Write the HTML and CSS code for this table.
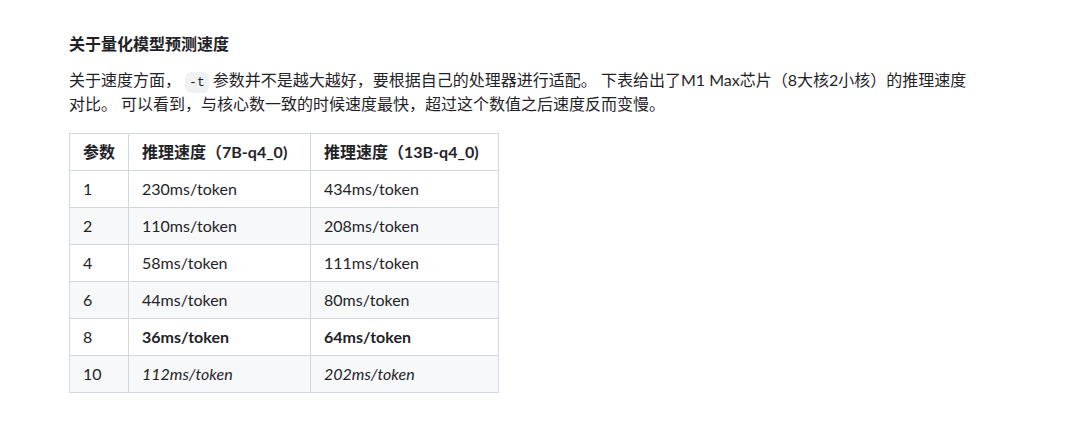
FILE: index.html
```html
<!DOCTYPE html>
<html lang="zh-CN">
<head>
<meta charset="utf-8">
<link rel="stylesheet" href="styles.css">
</head>
<body>
<article class="md">
  <h3 class="md-h">关于量化模型预测速度</h3>
  <p class="md-p">关于速度方面， <code class="md-code">-t</code> 参数并不是越大越好，要根据自己的处理器进行适配。 下表给出了M1 Max芯片（8大核2小核）的推理速度对比。 可以看到，与核心数一致的时候速度最快，超过这个数值之后速度反而变慢。</p>
  <table class="md-table">
    <thead>
      <tr><th>参数</th><th>推理速度（7B-q4_0)</th><th>推理速度（13B-q4_0)</th></tr>
    </thead>
    <tbody>
      <tr><td>1</td><td>230ms/token</td><td>434ms/token</td></tr>
      <tr><td>2</td><td>110ms/token</td><td>208ms/token</td></tr>
      <tr><td>4</td><td>58ms/token</td><td>111ms/token</td></tr>
      <tr><td>6</td><td>44ms/token</td><td>80ms/token</td></tr>
      <tr><td>8</td><td><strong>36ms/token</strong></td><td><strong>64ms/token</strong></td></tr>
      <tr><td>10</td><td><em>112ms/token</em></td><td><em>202ms/token</em></td></tr>
    </tbody>
  </table>
</article>
</body>
</html>
```

FILE: styles.css
```css
html, body {
  margin: 0;
  padding: 0;
  background: #ffffff;
}
body {
  font-family: "Lato", "Noto Sans CJK SC", sans-serif;
  color: #1f2328;
}
.md {
  padding: 32px 0 0 69px;
  width: 906px;
}
.md-h {
  margin: 0;
  font-size: 16px;
  line-height: 24px;
  font-weight: 700;
}
.md-p {
  margin: 12px 0 0 0;
  font-size: 16px;
  line-height: 24px;
}
.md-code {
  font-family: "Liberation Mono", "DejaVu Sans Mono", monospace;
  font-size: 13px;
  line-height: 1;
  padding: 3px 4px;
  background: rgba(175, 184, 193, 0.2);
  border-radius: 6px;
}
.md-table {
  margin-top: 17px;
  border-collapse: collapse;
  border-spacing: 0;
  font-size: 16px;
  line-height: 24px;
}
.md-table th,
.md-table td {
  border: 1px solid #d0d7de;
  padding: 6px 13px;
  text-align: left;
  white-space: nowrap;
}
.md-table th {
  font-weight: 700;
}
.md-table th:nth-child(1), .md-table td:nth-child(1) { width: 32px; }
.md-table th:nth-child(2), .md-table td:nth-child(2) { width: 155px; }
.md-table th:nth-child(3), .md-table td:nth-child(3) { width: 161px; }
.md-table tbody tr:nth-child(2n) {
  background: #f6f8fa;
}
.md-table strong { font-weight: 700; }
.md-table em { font-style: italic; }
```
